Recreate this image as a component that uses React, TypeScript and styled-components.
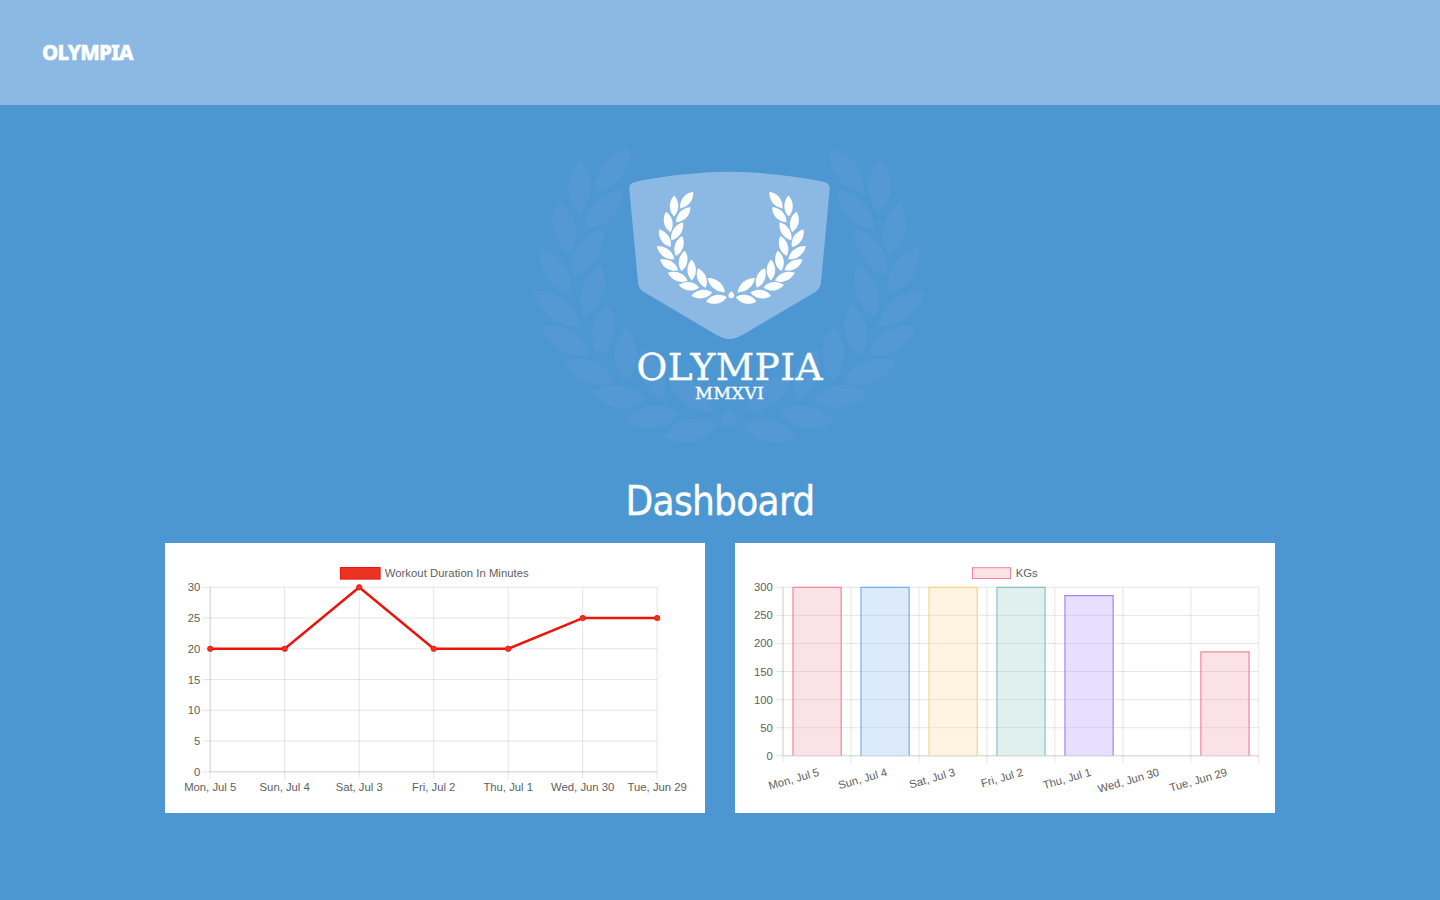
import React from "react";
import styled, { createGlobalStyle } from "styled-components";

const GlobalStyle = createGlobalStyle`
  * { box-sizing: border-box; }
  body {
    margin: 0;
    background: #4c97d2;
    color: #fff;
    font-family: "DejaVu Sans Condensed", "DejaVu Sans", sans-serif;
  }
`;

const Page = styled.div`
  display: flex;
  flex-direction: column;
  align-items: center;
  height: 900px;
  overflow: hidden;
`;

const Header = styled.header`
  display: flex;
  align-items: center;
  align-self: stretch;
  height: 105px;
  padding: 0 42px 2px;
  background: #8cb9e4;
`;

const Brand = styled.a`
  color: #fff;
  font-family: "Noto Sans", sans-serif;
  font-size: 20.5px;
  font-weight: 800;
  letter-spacing: -0.75px;
  -webkit-text-stroke: 0.5px #fff;
`;

const Crest = styled.svg`
  display: block;
  width: 420px;
  height: 320px;
  margin-top: 25px;
`;

const Title = styled.h1`
  margin: 27px 0 18px;
  font-family: "DejaVu Sans Condensed", "DejaVu Sans", sans-serif;
  font-stretch: condensed;
  font-size: 40px;
  font-weight: 400;
  line-height: 48px;
  letter-spacing: -0.7px;
  -webkit-text-stroke: 0.4px #fff;
`;

const Charts = styled.main`
  display: flex;
  gap: 30px;
`;

const Card = styled.section`
  width: 540px;
  height: 270px;
  background: #fff;
`;

const Plot = styled.svg`
  display: block;
  width: 540px;
  height: 270px;
  font-family: "Liberation Sans", Arial, sans-serif;
  font-size: 11.3px;
`;

const Label = styled.text`
  fill: #606060;
`;

const CrestText = styled.text<{ $size: number }>`
  fill: #fbfdfd;
  stroke: #fbfdfd;
  stroke-width: 0.4px;
  font-family: "DejaVu Serif", serif;
  font-size: ${(p) => p.$size}px;
`;

/* Each leaf runs from its tip to its base, measured from the berry. */
const BERRY = [729.5, 419];
const LEAVES = [
  [580, 158.5, 579.3, 213.5], [629.7, 149, 595.5, 192.5], [622.7, 189.8, 584.8, 229],
  [558.7, 201.5, 570, 254.8], [603, 228.7, 572.5, 276], [540.5, 248, 570.8, 293.8],
  [601, 264.5, 584.5, 317], [534.5, 291.3, 580.5, 326], [608, 303.5, 599, 356.5],
  [543, 326.5, 590.5, 354.6], [625.3, 326.4, 626.2, 381], [563.3, 361.3, 615.5, 382],
  [642, 349, 662.5, 400], [592, 393, 645.5, 399.5], [667.5, 375, 713, 412],
  [625.5, 421, 679.5, 413], [663.5, 436.3, 717.5, 425],
].map((p) => p.map((v, i) => v - BERRY[i % 2]));

function leafPath([tx, ty, bx, by]: number[]) {
  const dx = bx - tx;
  const dy = by - ty;
  const len = Math.hypot(dx, dy);
  const nx = (-dy / len) * 15.3;
  const ny = (dx / len) * 15.3;
  const at = (t: number, s: number) =>
    `${(tx + dx * t + nx * s).toFixed(2)} ${(ty + dy * t + ny * s).toFixed(2)}`;
  return `M${at(0, 0)}C${at(0.25, 0.88)} ${at(0.7, 1.06)} ${at(1, 0)}C${at(0.7, -1.06)} ${at(0.25, -0.88)} ${at(0, 0)}Z`;
}

function Wreath({ x, y, scale, fill }: { x: number; y: number; scale: number; fill: string }) {
  return (
    <g transform={`translate(${x} ${y}) scale(${scale})`} fill={fill}>
      {[1, -1].map((side) => (
        <g key={side} transform={`scale(${side} 1)`}>
          {LEAVES.map((l, i) => (
            <path key={i} d={leafPath(l)} />
          ))}
        </g>
      ))}
      <path d="M0 -9.5C4 -6 7.7 -2 7.7 2A7.7 6.5 0 0 1 -7.7 2C-7.7 -2 -4 -6 0 -9.5Z" />
    </g>
  );
}

const DAYS = ["Mon, Jul 5", "Sun, Jul 4", "Sat, Jul 3", "Fri, Jul 2", "Thu, Jul 1", "Wed, Jun 30", "Tue, Jun 29"];
const MINUTES = [20, 20, 30, 20, 20, 25, 25];
const KGS = [300, 300, 300, 300, 285, 0, 185];
const BAR_FILLS = ["#fbe2e6", "#dcebfb", "#fdf4e2", "#e0f0ef", "#e8dfff", "#fff", "#fbe2e6"];
const BAR_LINES = ["#f0869b", "#7caeea", "#f8d588", "#85c4c4", "#a288f5", "#fff", "#f0869b"];

function Grid(p: { left: number; right: number; bottom: number; columns: number; rows: number }) {
  const top = 44.3;
  return (
    <g stroke="#000" strokeOpacity={0.1}>
      {Array.from({ length: p.rows + 1 }, (_, i) => {
        const y = top + ((p.bottom - top) * i) / p.rows;
        return <path key={i} d={`M${p.left - 7.5} ${y}H${p.right}`} />;
      })}
      {Array.from({ length: p.columns + 1 }, (_, i) => {
        const x = p.left + ((p.right - p.left) * i) / p.columns;
        return <path key={i} d={`M${x} ${top}V${p.bottom + 7}`} />;
      })}
      <path d={`M${p.left} ${top}V${p.bottom}H${p.right}`} fill="none" />
    </g>
  );
}

function DurationChart() {
  const px = (i: number) => 45.2 + i * 74.5;
  const py = (v: number) => 228.8 - v * 6.15;
  return (
    <Plot viewBox="0 0 540 270">
      <rect x={175.5} y={24.5} width={39.6} height={11.6} fill="#ea3323" stroke="#e3170d" />
      <Label x={219.7} y={33.8} textLength={144}>Workout Duration In Minutes</Label>
      <Grid left={45.2} right={492.2} bottom={228.8} columns={6} rows={6} />
      {[0, 5, 10, 15, 20, 25, 30].map((v) => (
        <Label key={v} x={35.3} y={py(v) + 4} textAnchor="end">{v}</Label>
      ))}
      {DAYS.map((d, i) => (
        <Label key={d} x={px(i)} y={248.4} textAnchor="middle">{d}</Label>
      ))}
      <polyline
        points={MINUTES.map((v, i) => `${px(i)},${py(v)}`).join(" ")}
        fill="none" stroke="#ec1408" strokeWidth={2.4} strokeLinejoin="round"
      />
      {MINUTES.map((v, i) => (
        <circle key={i} cx={px(i)} cy={py(v)} r={2.7} fill="#ea3323" stroke="#ec1408" strokeWidth={0.8} />
      ))}
    </Plot>
  );
}

function WeightChart() {
  const left = 48;
  const step = 67.98;
  const base = 212.8;
  const py = (v: number) => base - v * 0.5617;
  return (
    <Plot viewBox="0 0 540 270">
      <rect x={237.5} y={24.7} width={38} height={10.8} fill="#fbe2e6" stroke="#f0869b" />
      <Label x={280.7} y={33.8} textLength={22}>KGs</Label>
      <Grid left={left} right={523.8} bottom={base} columns={7} rows={6} />
      {[0, 50, 100, 150, 200, 250, 300].map((v) => (
        <Label key={v} x={37.9} y={py(v) + 4} textAnchor="end">{v}</Label>
      ))}
      {KGS.map((v, i) => {
        if (!v) return null;
        const x = left + i * step + 10;
        return (
          <g key={i}>
            <rect x={x} y={py(v)} width={48.2} height={base - py(v)} fill={BAR_FILLS[i]} />
            {[0, 50, 100, 150, 200, 250].filter((t) => t < v).map((t) => (
              <path key={t} d={`M${x} ${py(t)}h48.2`} stroke="#000" strokeOpacity={0.08} />
            ))}
            <path d={`M${x} ${base}V${py(v)}h48.2V${base}`} fill="none" stroke={BAR_LINES[i]} strokeWidth={1.2} />
          </g>
        );
      })}
      {DAYS.map((d, i) => (
        <Label key={d} textAnchor="end" transform={`translate(${84.9 + i * step} 232.5) rotate(-16)`}>{d}</Label>
      ))}
    </Plot>
  );
}

export default function App() {
  return (
    <Page>
      <GlobalStyle />
      <Header>
        <Brand>OLYMPIA</Brand>
      </Header>
      <Crest viewBox="510 130 420 320">
        <Wreath x={729.5} y={419} scale={1} fill="#5499d4" />
        <path
          d="M629.4 190C628.8 184.5 631.5 182.4 637 181.4C667 175.5 698 172 729.5 171.7C761 172 792 175.5 822 181.4C827.5 182.4 830.2 184.5 829.6 190L821 282C820.5 287.5 818.5 290 813.5 293L742 335.3C733 340.2 726 340.2 717 335.3L645.5 293C640.5 290 638.5 287.5 638 282Z"
          fill="#8cb9e4"
        />
        <Wreath x={731.3} y={294.9} scale={0.382} fill="#fdfefe" />
        <CrestText $size={37.5} x={636.5} y={380} textLength={186}>OLYMPIA</CrestText>
        <CrestText $size={17.5} x={695} y={398.6} textLength={69}>MMXVI</CrestText>
      </Crest>
      <Title>Dashboard</Title>
      <Charts>
        <Card><DurationChart /></Card>
        <Card><WeightChart /></Card>
      </Charts>
    </Page>
  );
}
